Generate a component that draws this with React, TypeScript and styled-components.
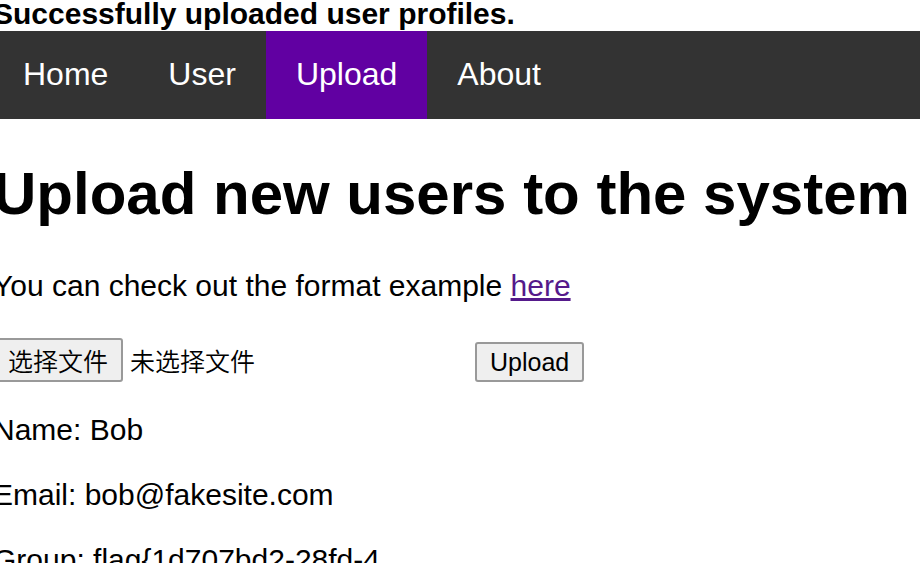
import React from "react";
import styled, { createGlobalStyle } from "styled-components";

const GlobalStyle = createGlobalStyle`
  html, body { margin: 0; background: #fff; overflow: hidden; }
  body { color: #000; font: 30px/34px "Liberation Sans", Arial, "Noto Sans CJK SC", sans-serif; }
`;
const Page = styled.div`
  height: 100vh;
  overflow: hidden;
`;
const Status = styled.strong`
  display: block;
  height: 31px;
  line-height: 28px;
  margin-left: -7px;
  font-size: 30px;
`;
const Nav = styled.nav`
  display: flex;
  margin-left: -7px;
  background: #333;
`;
const NavLink = styled.a<{ $active?: boolean }>`
  padding: 23px 30px 25px;
  color: #fff;
  background: ${(p) => (p.$active ? "#6100a2" : "transparent")};
  font-size: 32px;
  line-height: 40px;
  text-decoration: none;
`;
const Main = styled.main`
  margin-left: -7px;
`;
const Title = styled.h1`
  margin: 41px 0;
  font-size: 60px;
  line-height: 68px;
  white-space: nowrap;
`;
const Line = styled.p`
  margin: 0 0 31px;
  white-space: nowrap;
`;
const Link = styled.a`
  color: #551a8b;
`;
const Form = styled.form`
  display: flex;
  align-items: flex-end;
  margin: 35px 0 31px;
  font-size: 25px;
`;
const Picker = styled.div`
  display: flex;
  align-items: center;
  gap: 7px;
  width: 482px;
  font-weight: 350;
`;
const Button = styled.button`
  box-sizing: border-box;
  height: 40px;
  padding: 0 13px;
  border: 2px solid #999;
  border-radius: 3px;
  background: #efefef;
  color: #000;
  font: inherit;
  line-height: 36px;
`;
const FileButton = styled(Button)`
  height: 44px;
  padding-top: 4px;
`;
const FileName = styled.span`
  padding-top: 4px;
`;

export default function App() {
  const fileInput = React.useRef<HTMLInputElement>(null);
  const [fileName, setFileName] = React.useState("未选择文件");
  return (
    <Page>
      <GlobalStyle />
      <Status role="status">Successfully uploaded user profiles.</Status>
      <Nav>
        <NavLink href="#home">Home</NavLink>
        <NavLink href="#user">User</NavLink>
        <NavLink href="#upload" $active aria-current="page">Upload</NavLink>
        <NavLink href="#about">About</NavLink>
      </Nav>
      <Main>
        <Title>Upload new users to the system</Title>
        <Line>You can check out the format example <Link href="#example">here</Link></Line>
        <Form onSubmit={(e) => e.preventDefault()}>
          <Picker>
            <input ref={fileInput} type="file" hidden aria-label="选择文件" onChange={(e) => setFileName(e.target.files?.[0]?.name ?? "未选择文件")} />
            <FileButton type="button" onClick={() => fileInput.current?.click()}>选择文件</FileButton>
            <FileName>{fileName}</FileName>
          </Picker>
          <Button type="submit">Upload</Button>
        </Form>
        <Line>Name: Bob</Line>
        <Line>Email: bob@fakesite.com</Line>
        <Line>Group: flag&#123;1d707bd2-28fd-4</Line>
      </Main>
    </Page>
  );
}
